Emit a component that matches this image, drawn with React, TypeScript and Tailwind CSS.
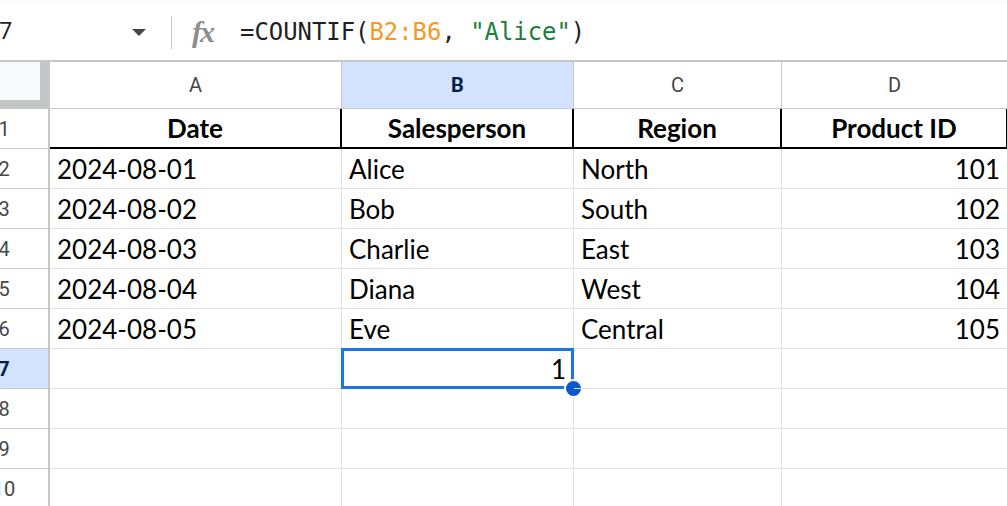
import React from 'react'

const COLS = [
  { key: 'A', w: 'w-[292px]' },
  { key: 'B', w: 'w-[232px]' },
  { key: 'C', w: 'w-[208px]' },
  { key: 'D', w: 'w-[226px]' },
]

const ROWS: (string | number)[][] = [
  ['2024-08-01', 'Alice', 'North', 101],
  ['2024-08-02', 'Bob', 'South', 102],
  ['2024-08-03', 'Charlie', 'East', 103],
  ['2024-08-04', 'Diana', 'West', 104],
  ['2024-08-05', 'Eve', 'Central', 105],
]

const cellFont = { fontFamily: 'Lato, "Noto Sans", sans-serif' }
const uiFont = { fontFamily: 'Roboto, "Liberation Sans", sans-serif' }

function RowHeader({ n, active }: { n: number; active?: boolean }) {
  return (
    <div
      className={`w-[50px] shrink-0 overflow-hidden border-r-2 border-b border-[#c4c7c5] flex items-center ${
        active ? 'bg-[#d3e3fd] text-[#041e49] font-bold' : 'bg-white text-[#444746]'
      }`}
      style={uiFont}
    >
      <div className="w-[90px] ml-[-41px] text-center text-[20px] leading-none shrink-0">{n}</div>
    </div>
  )
}

export default function App() {
  return (
    <div className="w-[1007px] h-[506px] overflow-hidden bg-white relative">
      {/* barra superior */}
      <div className="h-[4px] bg-[#f9fbfd]" />

      {/* barra de fórmula */}
      <div className="h-[56px] flex items-center bg-white">
        <div className="w-[171px] h-full flex items-center shrink-0">
          <span className="ml-[-15px] text-[23px] text-[#1f1f1f]" style={uiFont}>
            B7
          </span>
          <div className="ml-auto mr-[25px] w-0 h-0 border-l-[7px] border-r-[7px] border-t-[7px] border-l-transparent border-r-transparent border-t-[#444746]" />
        </div>
        <div className="w-px h-[33px] bg-[#c4c7c5] shrink-0" />
        <span
          className="ml-[20px] text-[30px] italic font-bold text-[#8e8e8e] leading-none tracking-[-2px]"
          style={{ fontFamily: '"Liberation Serif", serif' }}
        >
          fx
        </span>
        <div className="ml-[27px] pt-[2px] text-[23.9px] text-[#1f1f1f] whitespace-pre" style={{ fontFamily: '"DejaVu Sans Mono", monospace' }}>
          =COUNTIF(<span className="text-[#f59a23]">B2:B6</span>, <span className="text-[#188038]">"Alice"</span>)
        </div>
      </div>

      {/* cabeçalho das colunas */}
      <div className="flex h-[49px] border-t-2 border-[#c4c7c5]">
        <div className="w-[50px] shrink-0 bg-[#c4c7c5] flex flex-col">
          <div className="w-[40px] h-[38px] bg-[#f8f9fa]" />
        </div>
        {COLS.map((c) => (
          <div
            key={c.key}
            className={`${c.w} shrink-0 border-r border-b border-[#c4c7c5] flex items-center justify-center text-[20px] ${
              c.key === 'B' ? 'bg-[#d3e3fd] text-[#041e49] font-bold' : 'bg-white text-[#444746]'
            }`}
            style={uiFont}
          >
            {c.key}
          </div>
        ))}
      </div>

      {/* linha 1 */}
      <div className="flex h-[40px]">
        <RowHeader n={1} />
        {['Date', 'Salesperson', 'Region', 'Product ID'].map((t, i) => (
          <div
            key={t}
            className={`${COLS[i].w} shrink-0 border-r-2 border-b-2 border-black flex items-center justify-center text-[26px] font-bold text-black`}
            style={cellFont}
          >
            {t}
          </div>
        ))}
      </div>

      {/* dados */}
      {ROWS.map((r, ri) => (
        <div key={ri} className="flex h-[40px]">
          <RowHeader n={ri + 2} />
          {r.map((v, i) => (
            <div
              key={i}
              className={`${COLS[i].w} shrink-0 border-r border-b border-[#e1e1e1] flex items-center pt-[2px] text-[26px] text-black ${
                typeof v === 'number' ? 'justify-end pr-[7px]' : 'pl-[7px]'
              }`}
              style={cellFont}
            >
              {v}
            </div>
          ))}
        </div>
      ))}

      {/* linha 7 com a célula selecionada */}
      <div className="flex h-[40px]">
        <RowHeader n={7} active />
        {COLS.map((c) => (
          <div
            key={c.key}
            className={`${c.w} shrink-0 border-r border-b border-[#e1e1e1] flex items-center justify-end pt-[2px] pr-[7px] text-[26px] text-black relative`}
            style={cellFont}
          >
            {c.key === 'B' && (
              <>
                1
                <div className="absolute left-[-1px] top-[-1px] right-[-1px] bottom-[-1px] border-[3px] border-[#1a73e8]" />
                <div className="absolute right-[-10px] bottom-[-10px] w-[19px] h-[19px] rounded-full bg-[#0b57d0] border-2 border-white" />
              </>
            )}
          </div>
        ))}
      </div>

      {[8, 9, 10].map((n) => (
        <div key={n} className="flex h-[40px]">
          <RowHeader n={n} />
          {COLS.map((c) => (
            <div key={c.key} className={`${c.w} shrink-0 border-r border-b border-[#e1e1e1]`} />
          ))}
        </div>
      ))}
    </div>
  )
}
